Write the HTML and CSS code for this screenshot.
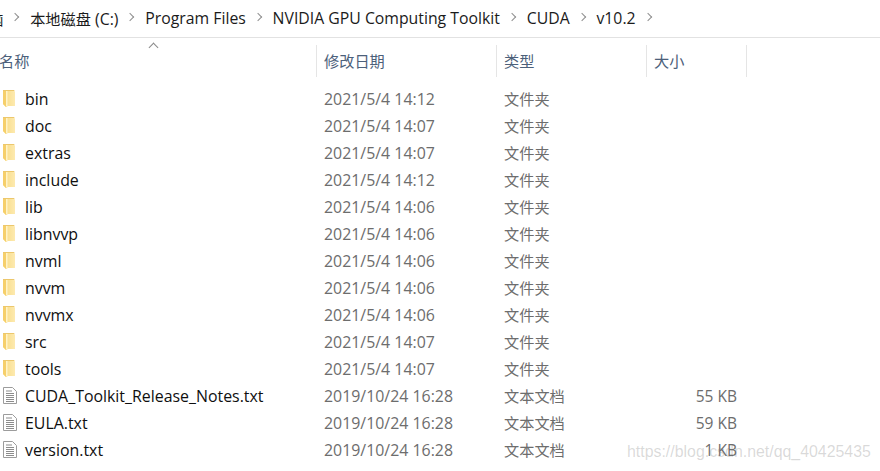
FILE: index.html
```html
<!DOCTYPE html>
<html lang="zh-CN">
<head>
<meta charset="utf-8">
<title>v10.2</title>
<link rel="stylesheet" href="styles.css">
</head>
<body>
<svg class="defs" width="0" height="0" aria-hidden="true">
  <defs>
    <linearGradient id="fg" x1="0" y1="0" x2="1" y2="0">
      <stop offset="0" stop-color="#f8da80"/>
      <stop offset="1" stop-color="#fdeab0"/>
    </linearGradient>
    <symbol id="folder" viewBox="0 0 12 17">
      <path d="M0 0h11l1 2v14H5l-2 1-3-3z" fill="url(#fg)"/>
      <path d="M0 0h3v17l-3-3z" fill="#f6cf6a"/>
      <path d="M3 1h1.500v15H3z" fill="#fff3c8"/>
      <path d="M0 0h11l.5 1H0z" fill="#ecc76c"/>
    </symbol>
    <symbol id="file" viewBox="0 0 14 17">
      <path d="M.5.5h9l4 4v12H.5z" fill="#fff" stroke="#9c9c9c"/>
      <path d="M3 4h6M3 6.500h8M3 8.500h8M3 10.500h8M3 12.500h8M3 14.500h8" stroke="#8c8c8c"/>
    </symbol>
  </defs>
</svg>
<nav class="crumbs">
  <span class="crumb cjk">电脑</span><span class="sep"></span>
  <span class="crumb"><span class="cjk">本地磁盘</span> (C:)</span><span class="sep"></span>
  <span class="crumb">Program Files</span><span class="sep"></span>
  <span class="crumb">NVIDIA GPU Computing Toolkit</span><span class="sep"></span>
  <span class="crumb">CUDA</span><span class="sep"></span>
  <span class="crumb">v10.2</span><span class="sep"></span>
</nav>
<div class="sortcue"><span class="caret"></span></div>
<div class="head">
  <div class="hname">名称</div>
  <div class="hcell">修改日期</div>
  <div class="hcell">类型</div>
  <div class="hcell">大小</div>
</div>
<main class="list">
  <div class="row"><svg class="ico"><use href="#folder"/></svg><span class="name">bin</span><span class="date">2021/5/4 14:12</span><span class="type">文件夹</span><span class="size"></span></div>
  <div class="row"><svg class="ico"><use href="#folder"/></svg><span class="name">doc</span><span class="date">2021/5/4 14:07</span><span class="type">文件夹</span><span class="size"></span></div>
  <div class="row"><svg class="ico"><use href="#folder"/></svg><span class="name">extras</span><span class="date">2021/5/4 14:07</span><span class="type">文件夹</span><span class="size"></span></div>
  <div class="row"><svg class="ico"><use href="#folder"/></svg><span class="name">include</span><span class="date">2021/5/4 14:12</span><span class="type">文件夹</span><span class="size"></span></div>
  <div class="row"><svg class="ico"><use href="#folder"/></svg><span class="name">lib</span><span class="date">2021/5/4 14:06</span><span class="type">文件夹</span><span class="size"></span></div>
  <div class="row"><svg class="ico"><use href="#folder"/></svg><span class="name">libnvvp</span><span class="date">2021/5/4 14:06</span><span class="type">文件夹</span><span class="size"></span></div>
  <div class="row"><svg class="ico"><use href="#folder"/></svg><span class="name">nvml</span><span class="date">2021/5/4 14:06</span><span class="type">文件夹</span><span class="size"></span></div>
  <div class="row"><svg class="ico"><use href="#folder"/></svg><span class="name">nvvm</span><span class="date">2021/5/4 14:06</span><span class="type">文件夹</span><span class="size"></span></div>
  <div class="row"><svg class="ico"><use href="#folder"/></svg><span class="name">nvvmx</span><span class="date">2021/5/4 14:06</span><span class="type">文件夹</span><span class="size"></span></div>
  <div class="row"><svg class="ico"><use href="#folder"/></svg><span class="name">src</span><span class="date">2021/5/4 14:07</span><span class="type">文件夹</span><span class="size"></span></div>
  <div class="row"><svg class="ico"><use href="#folder"/></svg><span class="name">tools</span><span class="date">2021/5/4 14:07</span><span class="type">文件夹</span><span class="size"></span></div>
  <div class="row"><svg class="ico doc"><use href="#file"/></svg><span class="name">CUDA_Toolkit_Release_Notes.txt</span><span class="date">2019/10/24 16:28</span><span class="type">文本文档</span><span class="size">55 KB</span></div>
  <div class="row"><svg class="ico doc"><use href="#file"/></svg><span class="name">EULA.txt</span><span class="date">2019/10/24 16:28</span><span class="type">文本文档</span><span class="size">59 KB</span></div>
  <div class="row"><svg class="ico doc"><use href="#file"/></svg><span class="name">version.txt</span><span class="date">2019/10/24 16:28</span><span class="type">文本文档</span><span class="size">1 KB</span></div>
</main>
<div class="watermark">https://blog.csdn.net/qq_40425435</div>
</body>
</html>
```
FILE: styles.css
```css
* { box-sizing: border-box; }
html, body { margin: 0; height: 100%; }
body {
  position: relative;
  width: 880px;
  height: 471px;
  overflow: hidden;
  background: #fff;
  color: #1b1b1b;
  font-family: "Open Sans", "Noto Sans CJK SC", sans-serif;
  font-size: 15.9px;
}
.defs { position: absolute; }
.cjk, .head, .type { font-size: 15.2px; }
.crumbs {
  display: flex;
  align-items: center;
  height: 38px;
  border-bottom: 1px solid #e2e2e2;
  padding-bottom: 1px;
  margin-left: -27px;
  font-size: 15.8px;
  white-space: nowrap;
}
.sep {
  width: 6px;
  height: 6px;
  border-top: 1.6px solid #8f8f8f;
  border-right: 1.6px solid #8f8f8f;
  transform: rotate(45deg);
  margin: 0 11.800px 2px 9px;
}
.sortcue { display: flex; height: 7px; padding: 6px 0 0 150px; }
.caret {
  width: 7px;
  height: 7px;
  border-top: 1px solid #8a8a8a;
  border-left: 1px solid #8a8a8a;
  transform: rotate(45deg);
}
.head {
  display: grid;
  grid-template-columns: 316px 180px 150px 100px 1px;
  height: 32px;
  color: #4c607a;
  line-height: 32px;
}
.hname { margin-left: -1px; }
.hcell { border-left: 1px solid #e5e5e5; padding-left: 7px; }
.head::after { content: ""; border-left: 1px solid #e5e5e5; }
.list { padding-top: 8px; }
.row {
  display: grid;
  grid-template-columns: 25px 299px 180px 150px 83px;
  align-items: center;
  height: 27px;
}
.ico { width: 12px; height: 17px; margin: 0 0 1px 3px; }
.ico.doc { width: 14px; height: 17px; }
.name { color: #0f0f0f; }
.date, .type, .size { color: #6d6d6d; }
.type { padding-bottom: 2px; }
.size { text-align: right; font-size: 15.5px; }
.watermark {
  position: absolute;
  left: 627px;
  top: 443px;
  font-family: "Liberation Sans", sans-serif;
  font-size: 15.9px;
  color: rgba(120, 120, 120, 0.28);
  white-space: nowrap;
}
```
